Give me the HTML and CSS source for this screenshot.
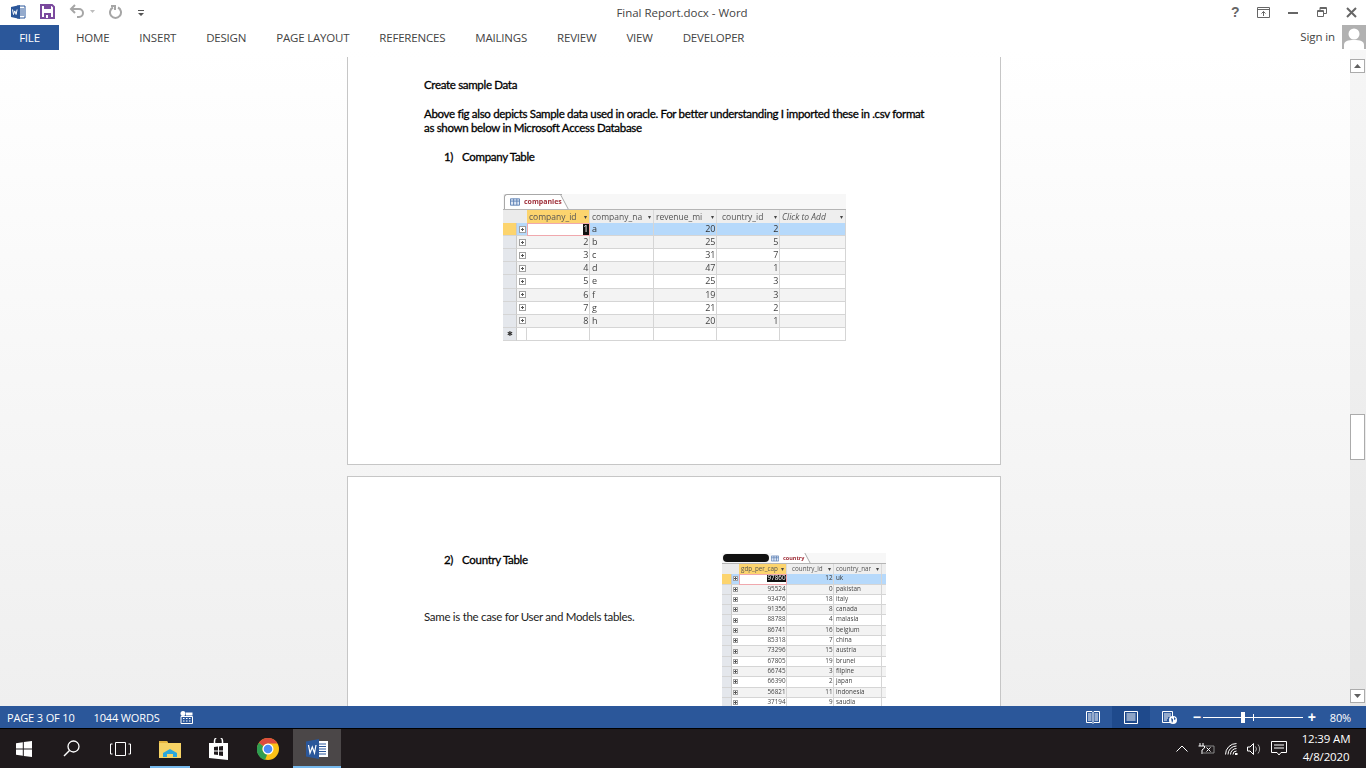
FILE: index.html
```html
<!DOCTYPE html>
<html lang="en">
<head>
<meta charset="utf-8">
<title>Final Report.docx - Word</title>
<link rel="stylesheet" href="styles.css">
</head>
<body>
<div class="app">
  <header class="titlebar">
    <div class="qat">
      <svg class="qi word-mini" width="16" height="16" viewBox="0 0 16 16"><path d="M7 2h8v12H7z" fill="#fff" stroke="#2b579a"/><path d="M9 5h5M9 7h5M9 9h5M9 11h5" stroke="#2b579a"/><path d="M1 3l9-2v14l-9-2z" fill="#2b579a"/><path d="M2.500 5.500l1 5 1.300-3.600 1.300 3.600 1-5" fill="none" stroke="#fff"/></svg>
      <svg class="qi save" width="15" height="15" viewBox="0 0 15 15"><path d="M1 1h11l2 2v11H1z" fill="none" stroke="#7b4a9e" stroke-width="2"/><path d="M4 1h7v4H4zM4 9h7v5H4z" fill="#7b4a9e"/><path d="M6 11h2v3H6z" fill="#fff"/></svg>
      <svg class="qi undo" width="16" height="15" viewBox="0 0 16 15"><path d="M3 5h7a4 4 0 0 1 0 8H8M6 1L2 5l4 4" fill="none" stroke="#a6a6a6" stroke-width="2"/></svg>
      <svg class="qi caret" width="5" height="3" viewBox="0 0 5 3"><path d="M0 0h5L2.500 3z" fill="#bdbdbd"/></svg>
      <svg class="qi redo" width="14" height="15" viewBox="0 0 14 15"><path d="M9 3.500a5.500 5.500 0 1 1-5 0M2 2h4v4" fill="none" stroke="#a6a6a6" stroke-width="2"/></svg>
      <svg class="qi more" width="6" height="6" viewBox="0 0 6 6"><path d="M0 0h6v1H0zM0 3h6L3 6z" fill="#555"/></svg>
    </div>
    <div class="doc-title">Final Report.docx - Word</div>
    <div class="winctl">
      <span class="help">?</span>
      <svg class="rib" width="13" height="11" viewBox="0 0 13 11"><path d="M.5.500h12v10H.5zM.5 2.500h12M6.500 9V4.500M4.500 6.500l2-2 2 2" fill="none" stroke="#666"/></svg>
      <svg class="min" width="10" height="2" viewBox="0 0 10 2"><path d="M0 0h10v2H0z" fill="#666"/></svg>
      <svg class="res" width="10" height="10" viewBox="0 0 10 10"><path d="M.5 3.500h6v6h-6zM3 3V.5h6.500v6H7M.5 4.500h6M3 1.500h6.500" fill="none" stroke="#666"/></svg>
      <svg class="cls" width="11" height="11" viewBox="0 0 11 11"><path d="M1 1l9 9M10 1l-9 9" stroke="#666" stroke-width="2"/></svg>
    </div>
  </header>
  <nav class="tabs">
    <div class="tab-file">FILE</div>
    <div class="tab-list">
      <span>HOME</span><span>INSERT</span><span>DESIGN</span><span>PAGE LAYOUT</span><span>REFERENCES</span><span>MAILINGS</span><span>REVIEW</span><span>VIEW</span><span>DEVELOPER</span>
    </div>
    <div class="sign">Sign in</div>
    <svg class="avatar" width="24" height="24" viewBox="0 0 24 24"><path d="M0 0h24v24H0z" fill="#b1b1b1"/><circle cx="12" cy="9" r="5.500" fill="#fff"/><path d="M2 24v-4c0-4 4-5 10-5s10 1 10 5v4z" fill="#fff"/></svg>
  </nav>
  <main class="workspace">
    <div class="canvas">
      <section class="page page-one">
        <p class="bold head">Create sample Data</p>
        <p class="bold para">Above fig also depicts Sample data used in oracle. For better understanding I imported these in .csv format<br>as shown below in Microsoft Access Database</p>
        <p class="bold item">1)<span class="item-text">Company Table</span></p>
        <figure class="access one">
          <div class="tabstrip"><span class="acc-tab"><svg width="10" height="8" viewBox="0 0 11 8"><path d="M.5.500h10v7H.5zM.5 3h10M4 .5v7M7.500.5v7" fill="#dfe8f5" stroke="#5b7fb3"/></svg>companies</span></div>
          <div class="grid grid-one">
            <div class="hd corner"></div><div class="hd corner"></div>
            <div class="hd sel">company_id<i>▾</i></div><div class="hd">company_na<i>▾</i></div><div class="hd">revenue_mi<i>▾</i></div><div class="hd pad">country_id<i>▾</i></div><div class="hd em">Click to Add<i>▾</i></div>
            <div class="rs cur"></div><div class="fold blue"></div><div class="cell r hl-cell"><b>1</b></div><div class="cell blue">a</div><div class="cell blue r">20</div><div class="cell blue r">2</div><div class="cell blue"></div>
            <div class="rs"></div><div class="fold alt"></div><div class="cell r alt">2</div><div class="cell alt">b</div><div class="cell alt r">25</div><div class="cell alt r">5</div><div class="cell alt"></div>
            <div class="rs"></div><div class="fold"></div><div class="cell r">3</div><div class="cell">c</div><div class="cell r">31</div><div class="cell r">7</div><div class="cell"></div>
            <div class="rs"></div><div class="fold alt"></div><div class="cell r alt">4</div><div class="cell alt">d</div><div class="cell alt r">47</div><div class="cell alt r">1</div><div class="cell alt"></div>
            <div class="rs"></div><div class="fold"></div><div class="cell r">5</div><div class="cell">e</div><div class="cell r">25</div><div class="cell r">3</div><div class="cell"></div>
            <div class="rs"></div><div class="fold alt"></div><div class="cell r alt">6</div><div class="cell alt">f</div><div class="cell alt r">19</div><div class="cell alt r">3</div><div class="cell alt"></div>
            <div class="rs"></div><div class="fold"></div><div class="cell r">7</div><div class="cell">g</div><div class="cell r">21</div><div class="cell r">2</div><div class="cell"></div>
            <div class="rs"></div><div class="fold alt"></div><div class="cell r alt">8</div><div class="cell alt">h</div><div class="cell alt r">20</div><div class="cell alt r">1</div><div class="cell alt"></div>
            <div class="rs star">✱</div><div class="cell"></div><div class="cell"></div><div class="cell"></div><div class="cell"></div><div class="cell"></div><div class="cell"></div>
          </div>
        </figure>
      </section>
      <section class="page page-two">
        <div class="two-left">
          <p class="bold item">2)<span class="item-text">Country Table</span></p>
          <p class="plain">Same is the case for User and Models tables.</p>
        </div>
        <figure class="access two">
          <div class="tabstrip"><span class="scribble"></span><span class="acc-tab"><svg width="8" height="7" viewBox="0 0 11 8"><path d="M.5.500h10v7H.5zM.5 3h10M4 .5v7M7.500.5v7" fill="#dfe8f5" stroke="#5b7fb3"/></svg>country</span></div>
          <div class="grid grid-two">
            <div class="hd corner"></div><div class="hd corner"></div>
            <div class="hd sel">gdp_per_cap<i>▾</i></div><div class="hd pad">country_id<i>▾</i></div><div class="hd">country_nar<i>▾</i></div><div class="hd"></div>
            <div class="rs cur"></div><div class="fold blue"></div><div class="cell r hl-cell"><b>97860</b></div><div class="cell blue r">12</div><div class="cell blue">uk</div><div class="cell blue"></div>
            <div class="rs"></div><div class="fold alt"></div><div class="cell r alt">95524</div><div class="cell alt r">0</div><div class="cell alt">pakistan</div><div class="cell alt"></div>
            <div class="rs"></div><div class="fold"></div><div class="cell r">93476</div><div class="cell r">18</div><div class="cell">italy</div><div class="cell"></div>
            <div class="rs"></div><div class="fold alt"></div><div class="cell r alt">91356</div><div class="cell alt r">8</div><div class="cell alt">canada</div><div class="cell alt"></div>
            <div class="rs"></div><div class="fold"></div><div class="cell r">88788</div><div class="cell r">4</div><div class="cell">malasia</div><div class="cell"></div>
            <div class="rs"></div><div class="fold alt"></div><div class="cell r alt">86741</div><div class="cell alt r">16</div><div class="cell alt">belgium</div><div class="cell alt"></div>
            <div class="rs"></div><div class="fold"></div><div class="cell r">85318</div><div class="cell r">7</div><div class="cell">china</div><div class="cell"></div>
            <div class="rs"></div><div class="fold alt"></div><div class="cell r alt">73296</div><div class="cell alt r">15</div><div class="cell alt">austria</div><div class="cell alt"></div>
            <div class="rs"></div><div class="fold"></div><div class="cell r">67805</div><div class="cell r">19</div><div class="cell">brunei</div><div class="cell"></div>
            <div class="rs"></div><div class="fold alt"></div><div class="cell r alt">66745</div><div class="cell alt r">3</div><div class="cell alt">filpine</div><div class="cell alt"></div>
            <div class="rs"></div><div class="fold"></div><div class="cell r">66390</div><div class="cell r">2</div><div class="cell">japan</div><div class="cell"></div>
            <div class="rs"></div><div class="fold alt"></div><div class="cell r alt">56821</div><div class="cell alt r">11</div><div class="cell alt">indonesia</div><div class="cell alt"></div>
            <div class="rs"></div><div class="fold"></div><div class="cell r">37194</div><div class="cell r">9</div><div class="cell">saudia</div><div class="cell"></div>
          </div>
        </figure>
      </section>
    </div>
    <aside class="scrollbar">
      <div class="sb-btn"><svg width="7" height="4" viewBox="0 0 7 4"><path d="M3.500 0L7 4H0z" fill="#606060"/></svg></div>
      <div class="sb-track"><div class="sb-thumb"></div></div>
      <div class="sb-btn"><svg width="7" height="4" viewBox="0 0 7 4"><path d="M0 0h7L3.500 4z" fill="#606060"/></svg></div>
    </aside>
  </main>
  <footer class="status">
    <span class="st-page">PAGE 3 OF 10</span>
    <span class="st-words">1044 WORDS</span>
    <svg class="st-macro" width="13" height="13" viewBox="0 0 13 13"><circle cx="3" cy="2.500" r="2.500" fill="#fff"/><path d="M1 5.500h11.500v7H1z" fill="none" stroke="#fff"/><path d="M6 1.500h6.500v3H6zM3 7h1.500v1H3zM6 7h1.500v1H6zM9 7h1.500v1H9zM3 9.500h1.500v1H3zM6 9.500h1.500v1H6zM9 9.500h1.500v1H9z" fill="#fff"/></svg>
    <div class="st-right">
      <svg class="v-read" width="14" height="13" viewBox="0 0 14 13"><path d="M.5.500h5.500L7 1.500 8 .5h5.500v11H8l-1 1-1-1H.5zM7 1.500v10M2 3h3.500M2 5h3.500M2 7h3.500M2 9h3.500M8.500 3H12M8.500 5H12M8.500 7H12M8.500 9H12" fill="none" stroke="#fff"/></svg>
      <div class="v-print"><svg width="14" height="13" viewBox="0 0 14 13"><path d="M.5.500h13v12H.5zM2.500 3h9M2.500 5h9M2.500 7h9M2.500 9h9" fill="none" stroke="#fff"/></svg></div>
      <svg class="v-web" width="15" height="13" viewBox="0 0 15 13"><path d="M.5.500h10v11H.5zM2 3h7M2 5h7M2 7h4M2 9h3" fill="none" stroke="#fff"/><circle cx="11" cy="9" r="4" fill="#fff"/><path d="M9 7l2 1v2l-1 2zM12 6l2 2-2 1z" fill="#2b579a"/></svg>
      <span class="zbtn">−</span>
      <div class="slider"><span class="tick"></span><span class="knob"></span></div>
      <span class="zbtn plus">+</span>
      <span class="zoomv">80%</span>
    </div>
  </footer>
  <div class="taskbar">
    <svg class="tb-start" width="16" height="16" viewBox="0 0 16 16"><path d="M0 2.300l6.800-1v6.300H0zM7.800 1.100L16 0v7.600H7.800zM0 8.500h6.800v6.300L0 13.800zM7.800 8.500H16V16l-8.200-1.100z" fill="#fff"/></svg>
    <svg class="tb-search" width="17" height="17" viewBox="0 0 17 17"><circle cx="10.500" cy="6.500" r="5.500" fill="none" stroke="#fff" stroke-width="1.300"/><path d="M6.500 10.500L1 16" stroke="#fff" stroke-width="1.500"/></svg>
    <svg class="tb-task" width="21" height="14" viewBox="0 0 21 14"><path d="M5.500.5h10v13h-10zM2.500 2H.5v10h2M18.500 2h2v10h-2" fill="none" stroke="#fff"/></svg>
    <div class="tb-app folder active-line">
      <svg width="22" height="18" viewBox="0 0 22 18"><path d="M0 1h8l1 2h13v15H0z" fill="#f6d365"/><path d="M0 1h8l1 2H0z" fill="#e5b53f"/><path d="M4 17v-4l7-4 7 4v4h-4v-3H8v3z" fill="#2aa7dc"/></svg>
    </div>
    <div class="tb-app store">
      <svg width="21" height="22" viewBox="0 0 21 22"><path d="M1 5h19v17L1 20z" fill="#fff"/><path d="M6.500 5V3a4 4 0 0 1 8 0v2" fill="none" stroke="#fff" stroke-width="1.500"/><path d="M6 9l4-.5v4H6zM11 8.500l4-.5v4.500h-4zM6 13.500h4V17l-4-.5zM11 13.500h4V18l-4-.5z" fill="#1f1a1c"/></svg>
    </div>
    <div class="tb-app chrome">
      <svg width="22" height="22" viewBox="0 0 22 22"><circle cx="11" cy="11" r="11" fill="#fbc116"/><path d="M11 0a11 11 0 0 1 9.530 5.500H11a5.500 5.500 0 0 0-4.800 2.800L1.900 4.800A11 11 0 0 1 11 0z" fill="#dd4b3e"/><path d="M1.900 4.800l4.300 3.500a5.500 5.500 0 0 0 4 8.200L8 22A11 11 0 0 1 1.900 4.800z" fill="#2f9e51"/><circle cx="11" cy="11" r="5.500" fill="#fff"/><circle cx="11" cy="11" r="4.300" fill="#4b8bf5"/></svg>
    </div>
    <div class="tb-app word-app active-line">
      <svg width="22" height="20" viewBox="0 0 22 20"><path d="M10 2h12v16H10z" fill="#fff"/><path d="M12 5h8M12 7.500h8M12 10h8M12 12.500h8M12 15h8" stroke="#2b579a"/><path d="M0 2.500L13 0v20L0 17.500z" fill="#2b579a"/><path d="M2.500 6l1.500 8 2.300-6 2.200 6 1.500-8" fill="none" stroke="#fff" stroke-width="1.200"/></svg>
    </div>
    <div class="tray">
      <svg class="tr-up" width="12" height="7" viewBox="0 0 12 7"><path d="M.5 6.500L6 1l5.500 5.500" fill="none" stroke="#fff"/></svg>
      <svg class="tr-bat" width="17" height="11" viewBox="0 0 17 11"><path d="M2 0v3M5 0v3M.5 3h6v2L4 7v4" fill="none" stroke="#fff"/><path d="M7 3h9v7H5" fill="none" stroke="#888"/><path d="M8.500 4.500l4 4M12.500 4.500l-4 4" stroke="#fff"/></svg>
      <svg class="tr-wifi" width="13" height="12" viewBox="0 0 13 12"><path d="M.5 11.500a11 11 0 0 1 11-11M3 11.500A8.500 8.500 0 0 1 11.500 3M5.500 11.500a6 6 0 0 1 6-6M8 11.500A3.500 3.500 0 0 1 11.500 8" fill="none" stroke="#fff"/><path d="M10 10h2.500v2H10z" fill="#fff"/></svg>
      <svg class="tr-vol" width="15" height="12" viewBox="0 0 15 12"><path d="M.5 4h2.500L6.500.5v11L3 8H.5z" fill="none" stroke="#fff"/><path d="M8.500 3.500a4 4 0 0 1 0 5M11 1.500a7 7 0 0 1 0 9" fill="none" stroke="#aaa"/></svg>
      <svg class="tr-note" width="16" height="15" viewBox="0 0 16 15"><path d="M.5.500h15v11H10l-2 2.500-2-2.500H.5zM3 4h10M3 7h10" fill="none" stroke="#fff"/></svg>
      <div class="clock"><span>12:39 AM</span><span>4/8/2020</span></div>
    </div>
  </div>
</div>
</body>
</html>
```
FILE: styles.css
```css
* { box-sizing: border-box; }
html, body { margin: 0; height: 100%; overflow: hidden; }
body { font-family: "Open Sans", "Liberation Sans", sans-serif; background: #fff; }
p { margin: 0; }
figure { margin: 0; }
svg { display: block; flex: none; }

.app { width: 1366px; height: 768px; display: flex; flex-direction: column; }

.titlebar { height: 25px; display: flex; align-items: center; background: #fff; position: relative; }
.qat { display: flex; align-items: center; padding-left: 10px; margin-bottom: 2px; }
.word-mini { margin-right: 14px; }
.save { margin-right: 14px; }
.undo { margin-right: 5px; }
.caret { margin-right: 14px; }
.redo { margin-right: 15px; }
.more { margin-top: 3px; }
.doc-title { position: absolute; left: 0; right: 0; top: 5px; text-align: center; font-size: 11.500px; letter-spacing: -.03px; color: #444; line-height: 16px; padding-right: 2px; }
.winctl { margin-left: auto; display: flex; align-items: center; margin-bottom: 1px; }
.help { font: bold 14px "Liberation Sans", sans-serif; color: #666; width: 9px; margin-right: 17px; line-height: 16px; }
.rib { margin-right: 18px; }
.min { margin-right: 19px; margin-top: 2px; }
.res { margin-right: 19px; }
.cls { margin-right: 9px; }

.tabs { height: 25px; display: flex; align-items: center; background: #fff; }
.tab-file { width: 59px; height: 25px; background: #2b579a; color: #fff; font-size: 11.500px; letter-spacing: -.2px; line-height: 25px; text-align: center; }
.tab-list { display: flex; padding-left: 17px; gap: 30px; font-size: 11.500px; letter-spacing: -.2px; color: #444; line-height: 25px; }
.sign { margin-left: auto; font-size: 11.500px; letter-spacing: -.1px; color: #444; margin-right: 7px; margin-bottom: 2px; }
.avatar { align-self: flex-start; }

.workspace { flex: 1; min-height: 0; display: flex; background: linear-gradient(180deg, #fff 0, #efefef 100%); }
.canvas { flex: 1; min-width: 0; overflow: hidden; display: flex; flex-direction: column; align-items: center; gap: 11px; margin-top: -1px; }
.page { width: 654px; background: #fff; border: 1px solid #c6c6c6; flex: none; margin-right: 2px; color: #000; }
.page-one { height: 408px; padding: 21px 0 0 76px; border-top: 0; margin-top: 8px; }
.page-two { height: 300px; padding: 76px 0 0 76px; display: flex; border-bottom: 0; }
.bold { font: 11.500px/14px Lato, "Liberation Sans", sans-serif; -webkit-text-stroke: .3px #000; letter-spacing: -.32px; }
.head { margin-bottom: 15px; }
.para { margin-bottom: 15px; }
.item { padding-left: 20px; display: flex; }
.item-text { margin-left: 9px; }
.plain { font: 11.500px/14px Lato, "Liberation Sans", sans-serif; color: #222; margin-top: 43px; letter-spacing: -.3px; }
.two-left { width: 298px; flex: none; }

.access { background: #fff; color: #444; filter: blur(.3px); }
.access.one { width: 343px; margin: 30px 0 0 79px; }
.access.two { width: 164px; height: 153px; overflow: hidden; }

.tabstrip { display: flex; align-items: flex-end; background: #f7f7f7; border-bottom: 1px solid #b5b5b5; }
.one .tabstrip { height: 16px; padding-left: 1px; }
.two .tabstrip { height: 11px; }
.acc-tab { display: flex; align-items: center; gap: 4px; background: #fff; border: 1px solid #a8a8a8; border-bottom: 0; border-right: 0; border-radius: 3px 0 0 0; padding: 0 0 0 5px; font-size: 7px; font-weight: 700; color: #a0303a; height: 100%; line-height: 10px; position: relative; z-index: 0; }
.acc-tab::after { content: ""; position: absolute; right: -3px; top: 0; bottom: 0; width: 10px; background: #fff; border-right: 1px solid #a8a8a8; transform: skewX(28deg); z-index: -1; }
.two .acc-tab { font-size: 5.500px; gap: 4px; padding: 0; border-top: 0; border-left: 0; line-height: 8px; }
.two .acc-tab::after { right: -4px; }
.scribble { width: 46px; height: 8px; margin: 0 2px 1px 1px; background: #111; border-radius: 4px; }

.grid { display: grid; background: #fff; }
.grid-one { grid-template-columns: 14px 10px 63px 64px 63px 63px 66px; grid-auto-rows: 13.100px; font-size: 8.500px; line-height: 12px; }
.grid-two { grid-template-columns: 10px 7px 48px 47px 48px 4px; grid-auto-rows: 10.300px; font-size: 6.300px; line-height: 8px; }

.hd { background: #eee; border-right: 1px solid #d9d9d9; padding: 0 2px; white-space: nowrap; overflow: hidden; display: flex; justify-content: space-between; align-items: center; color: #555; }
.hd.pad { padding-left: 5px; }
.hd i { font-style: normal; font-size: 6px; color: #444; }
.hd.sel { background: #fcd46e; }
.hd.em { font-style: italic; }
.corner { background: #ebebeb; border-right: 0; }
.rs { background: #e4e7ec; border-right: 1px solid #c9c9c9; border-bottom: 1px solid #d5d5d5; text-align: center; color: #333; font-size: 7px; }
.rs.cur { background: #fcd46e; }
.star { line-height: 12px; }
.fold { background: #fff; border-bottom: 1px solid #d5d5d5; display: flex; align-items: center; justify-content: center; }
.fold::before { content: ""; width: 5px; height: 5px; background: linear-gradient(#555, #555) center / 3px 1px no-repeat, linear-gradient(#555, #555) center / 1px 3px no-repeat, #fff; outline: 1px solid #a0a0a0; }
.grid-two .fold::before { width: 3px; height: 3px; }
.cell { border-right: 1px solid #d5d5d5; border-bottom: 1px solid #d5d5d5; padding: 0 2px; white-space: nowrap; overflow: hidden; background: #fff; color: #444; }
.grid-one .cell { font-size: 9px; }
.cell.r { text-align: right; padding-right: .5px; }
.alt { background: #f3f3f3; }
.cell.alt { background: #f3f3f3; }
.blue { background: #b6d9fb; }
.cell.blue { background: #b6d9fb; color: #333; }
.hl-cell { outline: 1px solid #f0a8ad; outline-offset: -1px; }
.hl-cell b { background: #111; color: #fff; font-weight: 400; }

.scrollbar { width: 16px; display: flex; flex-direction: column; background: linear-gradient(180deg, #f6f6f6, #e6e6e6); }
.sb-btn { height: 14px; width: 15px; border: 1px solid #ababab; background: #fff; display: flex; align-items: center; justify-content: center; flex: none; }
.sb-btn:first-child { margin-top: 9px; }
.sb-track { flex: 1; padding-top: 341px; }
.sb-thumb { width: 15px; height: 46px; background: #fff; border: 1px solid #ababab; }
.sb-btn:last-child { margin-bottom: 3px; }

.status { height: 22px; background: #2b579a; color: #fff; display: flex; align-items: center; font-size: 11px; letter-spacing: -.15px; flex: none; }
.st-page { margin-left: 7px; }
.st-words { margin-left: 19px; }
.st-macro { margin-left: 20px; }
.st-right { margin-left: auto; display: flex; align-items: center; height: 22px; }
.v-read { margin-right: 12px; }
.v-print { width: 38px; height: 22px; background: #1f4a8c; display: flex; align-items: center; justify-content: center; margin-right: 12px; }
.v-web { margin-right: 16px; }
.zbtn { font: bold 14px/16px "Liberation Sans", sans-serif; width: 8px; text-align: center; }
.slider { width: 100px; height: 1px; background: #fff; margin: 0 5px 0 2px; position: relative; }
.tick { position: absolute; left: 50px; top: -3px; width: 1px; height: 7px; background: #fff; }
.knob { position: absolute; left: 38px; top: -5px; width: 4px; height: 11px; background: #fff; }
.plus { margin-right: 14px; }
.zoomv { margin-right: 15px; }

.taskbar { height: 40px; background: #1f1a1c; display: flex; align-items: center; flex: none; border-top: 1px solid #000; position: relative; }
.tb-start { margin-left: 16px; }
.tb-search { margin-left: 31px; }
.tb-task { margin-left: 30px; }
.tb-app { width: 48px; height: 39px; display: flex; align-items: center; justify-content: center; flex: none; position: relative; }
.active-line::after { content: ""; position: absolute; left: 0; right: 0; bottom: 0; height: 2px; background: #76b9ed; }
.folder { margin-left: 19px; width: 40px; }
.store { margin-left: 4px; }
.chrome { margin-left: 2px; }
.word-app { background: #4b4748; margin-left: 1px; }
.tray { margin-left: auto; display: flex; align-items: center; }
.tr-up { margin-right: 10px; }
.tr-bat { margin-right: 10px; }
.tr-wifi { margin-right: 9px; }
.tr-vol { margin-right: 9px; }
.tr-note { margin-right: 15px; }
.clock { display: flex; flex-direction: column; align-items: center; color: #fff; font-size: 11.500px; letter-spacing: -.15px; line-height: 18px; width: 48px; margin-right: 16px; padding-bottom: 2px; white-space: nowrap; }
```
